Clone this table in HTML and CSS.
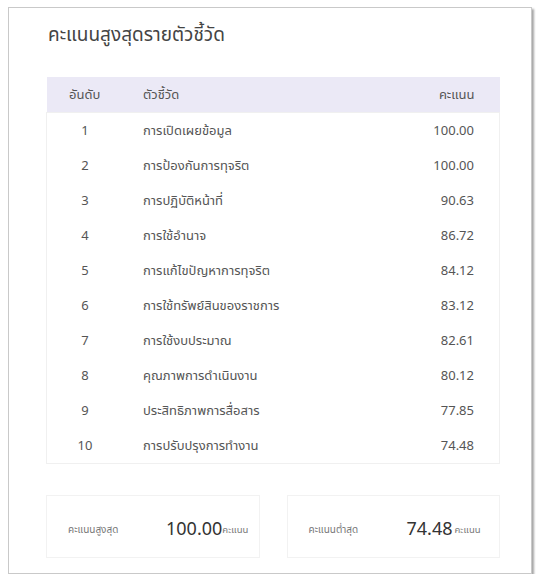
FILE: index.html
```html
<!DOCTYPE html>
<html lang="th">
<head>
<meta charset="utf-8">
<title>คะแนนสูงสุดรายตัวชี้วัด</title>
<link rel="stylesheet" href="styles.css">
</head>
<body>
<div class="card">
  <h1 class="title">คะแนนสูงสุดรายตัวชี้วัด</h1>
  <table class="rank-table">
    <thead>
      <tr><th class="c-rank">อันดับ</th><th class="c-name">ตัวชี้วัด</th><th class="c-score">คะแนน</th></tr>
    </thead>
    <tbody>
      <tr><td class="c-rank">1</td><td class="c-name">การเปิดเผยข้อมูล</td><td class="c-score">100.00</td></tr>
      <tr><td class="c-rank">2</td><td class="c-name">การป้องกันการทุจริต</td><td class="c-score">100.00</td></tr>
      <tr><td class="c-rank">3</td><td class="c-name">การปฏิบัติหน้าที่</td><td class="c-score">90.63</td></tr>
      <tr><td class="c-rank">4</td><td class="c-name">การใช้อำนาจ</td><td class="c-score">86.72</td></tr>
      <tr><td class="c-rank">5</td><td class="c-name">การแก้ไขปัญหาการทุจริต</td><td class="c-score">84.12</td></tr>
      <tr><td class="c-rank">6</td><td class="c-name">การใช้ทรัพย์สินของราชการ</td><td class="c-score">83.12</td></tr>
      <tr><td class="c-rank">7</td><td class="c-name">การใช้งบประมาณ</td><td class="c-score">82.61</td></tr>
      <tr><td class="c-rank">8</td><td class="c-name">คุณภาพการดำเนินงาน</td><td class="c-score">80.12</td></tr>
      <tr><td class="c-rank">9</td><td class="c-name">ประสิทธิภาพการสื่อสาร</td><td class="c-score">77.85</td></tr>
      <tr><td class="c-rank">10</td><td class="c-name">การปรับปรุงการทำงาน</td><td class="c-score">74.48</td></tr>
    </tbody>
  </table>
  <div class="summary">
    <div class="stat">
      <span class="stat-label">คะแนนสูงสุด</span>
      <span class="stat-value">100.00</span>
      <span class="stat-unit">คะแนน</span>
    </div>
    <div class="stat">
      <span class="stat-label">คะแนนต่ำสุด</span>
      <span class="stat-value">74.48</span>
      <span class="stat-unit">คะแนน</span>
    </div>
  </div>
</div>
</body>
</html>
```
FILE: styles.css
```css
html, body {
  margin: 0;
  padding: 0;
  background: #ffffff;
}
body {
  font-family: "Noto Sans Thai", "Noto Sans Thai UI", "Noto Sans", "DejaVu Sans", sans-serif;
  color: #555;
  padding: 7px 0 0 8px;
}
.card {
  box-sizing: border-box;
  width: 524px;
  height: 567px;
  border: 1px solid #c9c9c9;
  box-shadow: 2px 2px 2px rgba(0,0,0,0.35);
  background: #fff;
  padding: 0 31px 0 37px;
}
.title {
  margin: 0;
  padding: 14px 0 0 2px;
  height: 69px;
  box-sizing: border-box;
  font-size: 19px;
  font-weight: 400;
  color: #444;
  line-height: 28px;
}
.rank-table {
  width: 454px;
  border-collapse: collapse;
  font-size: 13px;
  color: #555;
}
.rank-table thead tr {
  background: #ebe9f6;
}
.rank-table th {
  height: 35px;
  font-weight: 400;
  padding: 0;
}
.rank-table td {
  height: 35px;
  padding: 0;
}
.rank-table tbody {
  border: 1px solid #f0f0f0;
}
.c-rank { width: 76px; text-align: center; }
.c-name { text-align: left; padding-left: 20px !important; }
.c-score { text-align: right; padding-right: 25px !important; }
.summary {
  display: flex;
  gap: 27px;
  margin-top: 31px;
  width: 454px;
}
.stat {
  flex: 1;
  height: 63px;
  box-sizing: border-box;
  border: 1px solid #f2f2f2;
  display: flex;
  align-items: center;
  padding: 6px 0 0 21px;
}
.stat-label {
  width: 98px;
  font-size: 10px;
  color: #777;
}
.stat-value {
  min-width: 48px;
  font-size: 18px;
  color: #333;
}
.stat-unit {
  font-size: 9.5px;
  color: #777;
}
```
